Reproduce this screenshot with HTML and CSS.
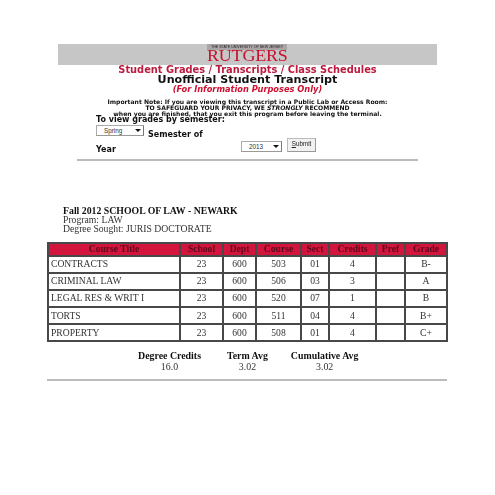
FILE: index.html
```html
<!DOCTYPE html>
<html lang="en">
<head>
<meta charset="utf-8">
<title>Unofficial Student Transcript</title>
<link rel="stylesheet" href="styles.css">
</head>
<body>
<div class="page">
  <header class="banner">
    <div class="logo">
      <div class="logo-top">THE STATE UNIVERSITY OF NEW JERSEY</div>
      <div class="logo-name">RUTGERS</div>
    </div>
  </header>
  <h2 class="nav-title">Student Grades / Transcripts / Class Schedules</h2>
  <h1 class="main-title">Unofficial Student Transcript</h1>
  <p class="subtitle">(For Information Purposes Only)</p>
  <div class="note">
    <p>Important Note: If you are viewing this transcript in a Public Lab or Access Room:</p>
    <p>TO SAFEGUARD YOUR PRIVACY, WE <em>STRONGLY</em> RECOMMEND</p>
    <p>when you are finished, that you exit this program before leaving the terminal.</p>
  </div>
  <form class="picker">
    <div class="picker-label">To view grades by semester:</div>
    <div class="picker-row">
      <div class="picker-col">
        <div class="semester-line">
          <span class="select select-sem"><span>Spring</span><i class="arrow"></i></span>
          <b class="label-inline">Semester of</b>
        </div>
        <b class="label-year">Year</b>
      </div>
      <div class="year-group">
        <span class="select select-year"><span>2013</span><i class="arrow"></i></span>
        <span class="btn"><u>S</u>ubmit</span>
      </div>
    </div>
  </form>
  <hr class="rule rule-top">
  <section class="term">
    <div class="term-title">Fall 2012 SCHOOL OF LAW - NEWARK</div>
    <div>Program: LAW</div>
    <div>Degree Sought: JURIS DOCTORATE</div>
  </section>
  <table class="grades">
    <colgroup>
      <col class="c-title"><col class="c-school"><col class="c-dept"><col class="c-course"><col class="c-sect"><col class="c-credits"><col class="c-pref"><col class="c-grade">
    </colgroup>
    <thead>
      <tr><th>Course Title</th><th>School</th><th>Dept</th><th>Course</th><th>Sect</th><th>Credits</th><th>Pref</th><th>Grade</th></tr>
    </thead>
    <tbody>
      <tr><td class="name">CONTRACTS</td><td>23</td><td>600</td><td>503</td><td>01</td><td>4</td><td></td><td>B-</td></tr>
      <tr><td class="name">CRIMINAL LAW</td><td>23</td><td>600</td><td>506</td><td>03</td><td>3</td><td></td><td>A</td></tr>
      <tr><td class="name">LEGAL RES &amp; WRIT I</td><td>23</td><td>600</td><td>520</td><td>07</td><td>1</td><td></td><td>B</td></tr>
      <tr><td class="name">TORTS</td><td>23</td><td>600</td><td>511</td><td>04</td><td>4</td><td></td><td>B+</td></tr>
      <tr><td class="name">PROPERTY</td><td>23</td><td>600</td><td>508</td><td>01</td><td>4</td><td></td><td>C+</td></tr>
    </tbody>
  </table>
  <div class="summary">
    <div class="stat stat-credits"><b>Degree Credits</b><span>16.0</span></div>
    <div class="stat stat-term"><b>Term Avg</b><span>3.02</span></div>
    <div class="stat stat-cum"><b>Cumulative Avg</b><span>3.02</span></div>
  </div>
  <hr class="rule rule-bottom">
</div>
</body>
</html>
```

FILE: styles.css
```css
* { box-sizing: border-box; }
html, body { margin: 0; padding: 0; background: #fff; }
body { width: 495px; height: 495px; overflow: hidden; }
.page {
  padding-top: 44px;
  color: #111;
  font-family: "Liberation Serif", serif;
  filter: blur(0.5px);
}
.banner {
  margin: 0 58px;
  height: 21px;
  background: #c6c6c6;
  display: flex;
  justify-content: center;
}
.logo {
  width: 80px;
  margin-left: -1px;
  color: #c8102e;
  text-align: center;
  background: #c6c6c6;
}
.logo-top {
  height: 6px;
  background: #a9a5a5;
  color: #222;
  font: 3.6px/6px "Liberation Sans", sans-serif;
  white-space: nowrap;
}
.logo-name {
  font: 18px/15px "Liberation Serif", serif;
  letter-spacing: -0.2px;
  height: 15px;
  transform: scaleY(0.88);
  transform-origin: top center;
}
.nav-title, .main-title, .subtitle {
  margin: 0;
  text-align: center;
  font-family: "DejaVu Sans", sans-serif;
  font-weight: bold;
}
.nav-title { font-size: 9.85px; line-height: 10px; height: 10px; color: #bd1a3f; }
.main-title { font-size: 11.15px; line-height: 9px; height: 9px; color: #111; }
.subtitle { font-size: 8.25px; line-height: 11px; height: 11px; font-style: italic; color: #d01030; }
.note {
  margin-top: 4px;
  height: 18px;
  text-align: center;
  font: bold 6.07px/6px "DejaVu Sans", sans-serif;
}
.note p { margin: 0; }
.picker { margin: 0 0 0 96px; width: 322px; font-family: "DejaVu Sans", sans-serif; }
.picker-label { font-weight: bold; font-size: 8px; line-height: 5px; height: 5px; }
.picker-row { display: flex; margin-top: 3px; }
.picker-col { width: 145px; }
.semester-line { display: flex; align-items: flex-end; height: 11px; }
.label-inline { font-size: 8px; line-height: 9px; margin-left: 4px; margin-bottom: -3px; }
.label-year { display: block; font-size: 8px; line-height: 9px; margin-top: 9px; }
.select {
  display: flex;
  align-items: center;
  height: 11px;
  border: 1px solid #aaa;
  border-right-color: #777;
  border-bottom-color: #999;
  background: #fff;
  font: 6.3px/9px "Liberation Sans", sans-serif;
  color: #333;
  position: relative;
}
.select-sem { width: 48px; padding-left: 7px; }
.select-year { width: 41px; padding-left: 7px; }
.arrow {
  position: absolute;
  right: 2px;
  top: 3px;
  width: 0;
  height: 0;
  border: 3px solid transparent;
  border-top: 3px solid #111;
  border-bottom: 0;
}
.year-group { display: flex; align-items: flex-end; margin-top: 13px; height: 14px; }
.btn {
  margin-left: 5px;
  width: 29px;
  height: 14px;
  border: 1px solid #bbb;
  border-right-color: #999;
  border-bottom-color: #999;
  background: #f1f1f1;
  font: 6.3px/10px "Liberation Sans", sans-serif;
  text-align: center;
  color: #222;
}
.rule { border: 0; background: #bbb; height: 2px; margin: 0; }
.rule-top { margin: 5px 77px 0 77px; }
.term { margin: 45px 0 0 63px; font-size: 9.7px; line-height: 9px; color: #333; }
.term-title { font-weight: bold; font-size: 9.8px; color: #111; }
.grades {
  margin: 9px 0 0 47px;
  width: 399px;
  table-layout: fixed;
  border-collapse: collapse;
  border: 2px solid #484848;
  font-size: 9.6px;
}
.c-title { width: 132px; } .c-school { width: 43px; } .c-dept { width: 33px; } .c-course { width: 45px; }
.c-sect { width: 28px; } .c-credits { width: 47px; } .c-pref { width: 29px; } .c-grade { width: 42px; }
.grades th, .grades td { border: 2px solid #484848; padding: 0; text-align: center; overflow: hidden; white-space: nowrap; }
.grades th { height: 12.5px; background: #d3143c; color: #5a0a1c; font-weight: bold; line-height: 10px; }
.grades td { height: 17.2px; color: #333; padding-bottom: 1px; }
.grades td.name { text-align: left; padding-left: 2px; }
.summary { height: 24px; margin-top: 8px; font-size: 9.9px; line-height: 11px; color: #333; display: flex; }
.stat { display: flex; flex-direction: column; align-items: center; }
.stat b { color: #111; }
.stat-credits { margin-left: 138px; }
.stat-term { margin-left: 26px; }
.stat-cum { margin-left: 23px; }
.rule-bottom { margin: 5px 48px 0 47px; }
```
